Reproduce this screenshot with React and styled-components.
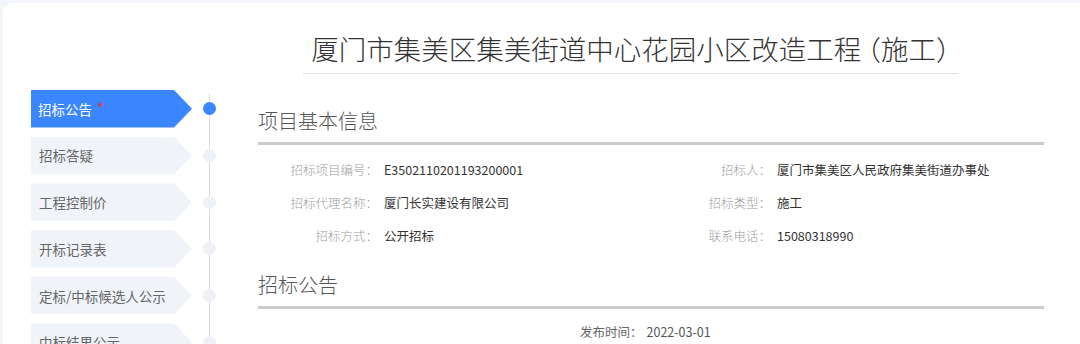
import React from "react";
import styled, { createGlobalStyle } from "styled-components";

const Global = createGlobalStyle`
  html, body { margin: 0; padding: 0; background: #f2f5f9; }
  body { font-family: "Noto Sans CJK SC", "Noto Sans", sans-serif; overflow: hidden; }
  * { box-sizing: border-box; }
`;

const Card = styled.div`
  margin: 3px 0 0 3px;
  height: 341px;
  background: #fff;
  border-top-left-radius: 9px;
  padding: 27px 0 0 28px;
  overflow: hidden;
`;

const TitleBar = styled.div`
  margin-left: 272px;
  width: 655px;
  padding-bottom: 7px;
  border-bottom: 1px solid #e2e2e2;
  text-align: center;
`;

const Title = styled.h1`
  margin: 0;
  font-size: 27.5px;
  line-height: 36px;
  font-weight: 300;
  color: #333;
  font-feature-settings: "halt";
`;

const Paren = styled.span`
  margin: 0 ${(p) => (p.$open ? "0 0 6px" : "0 0 0 2px")};
`;

const Body = styled.div`
  display: flex;
  margin-top: 16px;
`;

const Steps = styled.div`
  display: flex;
  flex-direction: column;
`;

const Step = styled.div`
  display: flex;
  align-items: stretch;
  height: 46.7px;
`;

const Tab = styled.div`
  width: 161px;
  height: 37.5px;
  padding-left: ${(p) => (p.$active ? 7 : 8)}px;
  display: flex;
  align-items: center;
  font-size: 13.5px;
  color: ${(p) => (p.$active ? "#fff" : "#666")};
  background: ${(p) => (p.$active ? "#3a86fe" : "#f0f4f9")};
  clip-path: polygon(0 0, 143px 0, 100% 50%, 143px 100%, 0 100%);
  white-space: nowrap;
`;

const Star = styled.span`
  color: #e5383b;
  font-size: 15px;
  margin-left: 5px;
  margin-top: -3px;
`;

const DotCol = styled.div`
  width: 34px;
  position: relative;
  background: linear-gradient(#dcdcdc, #dcdcdc) no-repeat;
  background-size: 1px ${(p) => (p.$first ? "calc(100% - 4px)" : "100%")};
  background-position: 16.5px ${(p) => (p.$first ? "4px" : "0")};
`;

const Dot = styled.span`
  position: absolute;
  left: 10.5px;
  top: 12.25px;
  width: 13px;
  height: 13px;
  border-radius: 50%;
  background: ${(p) => (p.$active ? "#3a86fe" : "#eef2f7")};
`;

const Main = styled.div`
  margin-left: 32px;
  width: 786px;
`;

const SectionHead = styled.h2`
  margin: ${(p) => (p.$second ? "2px" : "0")} 0 0;
  padding: 16.7px 0 7.3px;
  font-size: 20px;
  line-height: 28px;
  font-weight: 300;
  color: #555;
  border-bottom: 3px solid #cccccc;
`;

const InfoGrid = styled.div`
  display: grid;
  grid-template-columns: 393px 393px;
  margin-top: 8.6px;
`;

const InfoItem = styled.div`
  display: flex;
  height: 32.8px;
  align-items: center;
  font-size: 12.5px;
`;

const Label = styled.span`
  width: 120px;
  text-align: right;
  color: #a0a0a0;
  font-weight: 300;
  flex: none;
`;

const Value = styled.span`
  margin-left: 6px;
  color: #333;
  white-space: nowrap;
`;

const PubTime = styled.div`
  margin-top: 14px;
  padding-left: 322px;
  font-size: 12.5px;
  line-height: 18px;
  color: #666;
  span { color: #555; margin-left: 4px; }
`;

const steps = [
  { label: "招标公告", active: true },
  { label: "招标答疑" },
  { label: "工程控制价" },
  { label: "开标记录表" },
  { label: "定标/中标候选人公示" },
  { label: "中标结果公示" },
];

const info = [
  ["招标项目编号：", "E3502110201193200001"],
  ["招标人：", "厦门市集美区人民政府集美街道办事处"],
  ["招标代理名称：", "厦门长实建设有限公司"],
  ["招标类型：", "施工"],
  ["招标方式：", "公开招标"],
  ["联系电话：", "15080318990"],
];

export default function App() {
  return (
    <>
      <Global />
      <Card>
        <TitleBar>
          <Title>
            厦门市集美区集美街道中心花园小区改造工程<Paren $open>（</Paren>施工<Paren>）</Paren>
          </Title>
        </TitleBar>
        <Body>
          <Steps>
            {steps.map((s, i) => (
              <Step key={s.label}>
                <Tab $active={s.active}>
                  {s.label}
                  {s.active && <Star>*</Star>}
                </Tab>
                <DotCol $first={i === 0}>
                  <Dot $active={s.active} />
                </DotCol>
              </Step>
            ))}
          </Steps>
          <Main>
            <SectionHead>项目基本信息</SectionHead>
            <InfoGrid>
              {info.map(([l, v]) => (
                <InfoItem key={l}>
                  <Label>{l}</Label>
                  <Value>{v}</Value>
                </InfoItem>
              ))}
            </InfoGrid>
            <SectionHead $second>招标公告</SectionHead>
            <PubTime>
              发布时间：<span>2022-03-01</span>
            </PubTime>
          </Main>
        </Body>
      </Card>
    </>
  );
}
